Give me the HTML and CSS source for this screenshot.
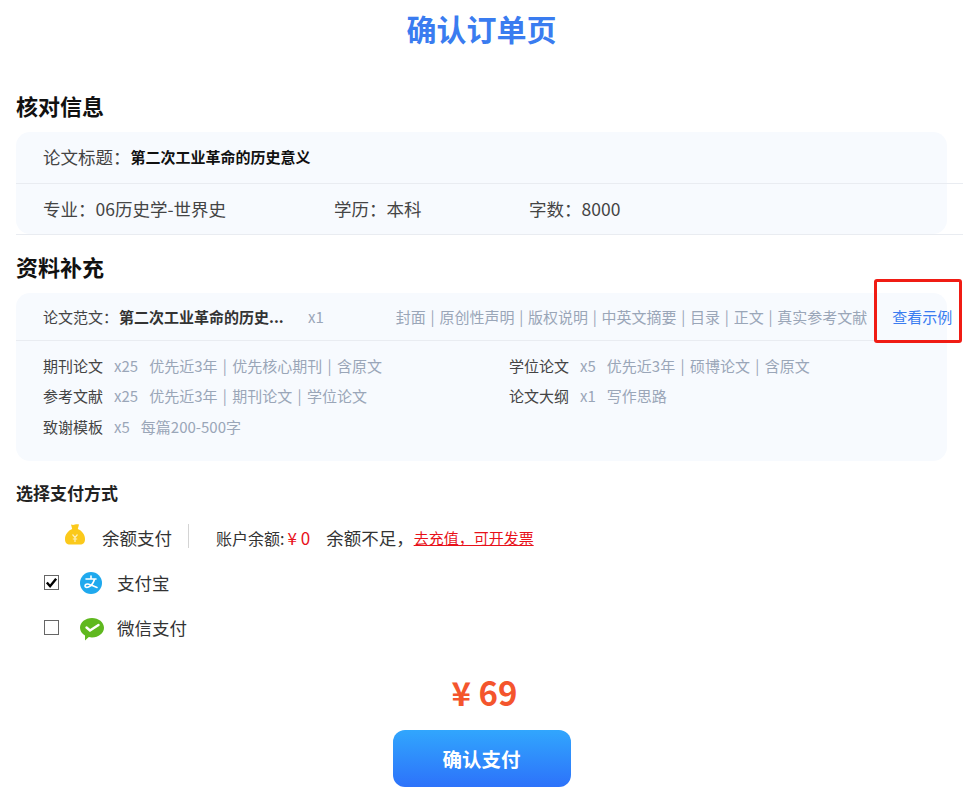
FILE: index.html
```html
<!DOCTYPE html>
<html lang="zh-CN">
<head>
    <meta charset="UTF-8">
    <title>确认订单页</title>
    <link rel="stylesheet" href="styles.css">
</head>
<body>
    <h1 class="page-title">确认订单页</h1>

    <h2 class="section-title first">核对信息</h2>
    <div class="info-row">
        <div class="info-inner top"><span>论文标题：</span><b class="paper-name">第二次工业革命的历史意义</b></div>
    </div>
    <div class="info-row">
        <div class="info-inner bottom">
            <span class="col-major">专业：06历史学-世界史</span>
            <span class="col-degree">学历：本科</span>
            <span>字数：8000</span>
        </div>
    </div>

    <h2 class="section-title">资料补充</h2>
    <div class="extra-card">
        <div class="extra-head">
            <span class="dark sample-label">论文范文：</span><b class="sample-name">第二次工业革命的历史...</b>
            <span class="count">x1</span>
            <span class="parts">封面 | 原创性声明 | 版权说明 | 中英文摘要 | 目录 | 正文 | 真实参考文献</span>
            <a class="example-link">查看示例</a>
            <div class="red-box"></div>
        </div>
        <div class="extra-grid">
            <div class="extra-item"><span class="dark">期刊论文</span><span class="count">x25</span><span class="parts-text">优先近3年 | 优先核心期刊 | 含原文</span></div>
            <div class="extra-item"><span class="dark">学位论文</span><span class="count">x5</span><span class="parts-text">优先近3年 | 硕博论文 | 含原文</span></div>
            <div class="extra-item"><span class="dark">参考文献</span><span class="count">x25</span><span class="parts-text">优先近3年 | 期刊论文 | 学位论文</span></div>
            <div class="extra-item"><span class="dark">论文大纲</span><span class="count">x1</span><span class="parts-text">写作思路</span></div>
            <div class="extra-item"><span class="dark">致谢模板</span><span class="count">x5</span><span class="parts-text">每篇200-500字</span></div>
        </div>
    </div>

    <h3 class="pay-title">选择支付方式</h3>
    <div class="pay-balance">
        <svg class="bag-icon" width="20" height="21" viewBox="0 0 20 21">
            <path fill="#fbc91b" d="M6 .5c1.300.600 2.600.600 4 .100s2.800-.500 4 0L12.800 5C16.800 6.500 20 10.500 20 15c0 4-1.800 5.500-5 5.500H5c-3.200 0-5-1.500-5-5.500 0-4.500 3.200-8.500 7.200-10z"/>
            <path fill="none" stroke="#fff" stroke-opacity=".7" stroke-width="1.200" d="M7.500 10.500l2.500 3 2.500-3M10 13.500v4.500M7.800 15h4.400"/>
        </svg>
        <span class="bal-label">余额支付</span>
        <span class="bal-sep"></span>
        <span class="bal-account">账户余额:</span>
        <span class="bal-money">¥ 0</span>
        <span class="bal-lack">余额不足，</span>
        <a class="recharge">去充值，可开发票</a>
    </div>
    <div class="pay-option">
        <span class="check-box checked">
            <svg width="14" height="14" viewBox="0 0 14 14"><path fill="none" stroke="#000" stroke-width="2.600" d="M2 6.500l3.500 4L12 2.500"/></svg>
        </span>
        <svg class="pay-icon" width="22" height="22" viewBox="0 0 22 22">
            <circle cx="11" cy="11" r="11" fill="#1fa9ee"/>
            <path fill="none" stroke="#fff" stroke-width="1.600" stroke-linecap="round" d="M6 7h10M11 4v3M14.500 7c-.800 3.500-3.200 6.800-6 8-1.900.800-3.500.300-3.500-1 0-1.600 1.900-2.400 3.800-1.800 2.700.800 5 2.200 8.200 3.300"/>
        </svg>
        <span>支付宝</span>
    </div>
    <div class="pay-option">
        <span class="check-box"></span>
        <svg class="pay-icon wechat" width="24" height="23" viewBox="0 0 24 23">
            <path fill="#5fb81f" d="M12 0c6.600 0 12 4.300 12 9.700s-5.400 9.700-12 9.700c-1.100 0-2.200-.100-3.200-.400L5 22.500v-5C2 15.700 0 12.900 0 9.700 0 4.300 5.400 0 12 0z"/>
            <path fill="none" stroke="#fff" stroke-width="2.400" stroke-linecap="round" d="M6.500 9.500l3.500 3L18.500 7"/>
        </svg>
        <span>微信支付</span>
    </div>

    <div class="total">¥ 69</div>
    <button class="pay-btn" type="button">确认支付</button>
</body>
</html>
```

FILE: styles.css
```css
* {
    box-sizing: border-box;
}
body {
    margin: 0;
    font-family: "Noto Sans CJK SC", "Liberation Sans", sans-serif;
    color: #333;
    background: #fff;
    overflow-x: hidden;
}
.page-title {
    margin: 0;
    padding-top: 6px;
    height: 47px;
    line-height: 44px;
    text-align: center;
    font-size: 30px;
    font-weight: 700;
    color: #3a7cf0;
}
.section-title {
    margin: 0 0 0 16px;
    height: 58px;
    padding-top: 2px;
    line-height: 58px;
    font-size: 22px;
    font-weight: 700;
    color: #111;
}
.section-title.first {
    height: 85px;
    padding-top: 29px;
}
.info-row {
    margin-left: 16px;
    border-bottom: 1px solid #e9ecf1;
}
.info-inner {
    height: 50px;
    margin-right: 16px;
    padding-left: 27px;
    padding-bottom: 2px;
    display: flex;
    align-items: center;
    font-size: 17.500px;
    color: #444;
    background: #f7fafe;
}
.info-inner.top {
    height: 51px;
    border-radius: 14px 14px 0 0;
}
.info-inner.bottom {
    border-radius: 0 0 14px 14px;
}
.paper-name {
    font-size: 15px;
    color: #111;
}
.col-major {
    width: 291px;
}
.col-degree {
    width: 195px;
}
.extra-card {
    margin: 0 16px;
    height: 168px;
    background: #f7fafe;
    border-radius: 14px;
    font-size: 15px;
    color: #9aa6b8;
}
.extra-head {
    position: relative;
    height: 48px;
    padding-left: 27px;
    display: flex;
    align-items: center;
    white-space: nowrap;
    border-bottom: 1px solid #e9ecf1;
}
.extra-head > * {
    flex-shrink: 0;
}
.dark {
    color: #444;
}
.sample-label {
    margin-right: 1px;
}
.sample-name {
    width: 189px;
    color: #333;
}
.count {
    margin-right: 11px;
}
.parts {
    margin-left: 61px;
    word-spacing: 1.400px;
}
.parts-text {
    word-spacing: 2px;
}
.example-link {
    margin-left: 25px;
    color: #3a7cf0;
}
.red-box {
    position: absolute;
    left: 858px;
    top: -14px;
    width: 88px;
    height: 64px;
    border: 3px solid #f01c14;
    border-radius: 3px;
}
.extra-grid {
    display: grid;
    grid-template-columns: 466px 1fr;
    grid-auto-rows: 30.500px;
    padding: 9px 0 0 27px;
}
.extra-item {
    display: flex;
    align-items: center;
}
.extra-item .dark {
    margin-right: 11px;
}
.pay-title {
    margin: 0 0 0 16px;
    height: 54px;
    padding-top: 17px;
    line-height: 30px;
    font-size: 17px;
    font-weight: 700;
    color: #222;
}
.pay-balance {
    height: 45px;
    display: flex;
    align-items: center;
    padding-left: 65px;
    font-size: 16px;
}
.bag-icon {
    margin-right: 17px;
    margin-top: -7px;
}
.bal-label {
    font-size: 17.500px;
    margin-right: 16px;
}
.bal-sep {
    width: 1px;
    height: 24px;
    margin-right: 27px;
    margin-top: -4px;
    background: #d4d4d4;
}
.bal-money {
    margin-left: 3px;
    margin-right: 16px;
    font-size: 17px;
    color: #e8111a;
}
.bal-lack {
    font-size: 17.500px;
}
.recharge {
    font-size: 15px;
    color: #e8111a;
    text-decoration: underline;
}
.pay-option {
    height: 45px;
    display: flex;
    align-items: center;
    padding-left: 44px;
    font-size: 17.500px;
}
.check-box {
    width: 15px;
    height: 15px;
    margin-right: 21px;
    border: 1px solid #666;
    display: flex;
    align-items: center;
    justify-content: center;
}
.pay-icon {
    margin-right: 15px;
}
.pay-icon.wechat {
    margin-top: 3px;
    margin-right: 13px;
}
.total {
    margin-top: 17px;
    padding-left: 6px;
    text-align: center;
    height: 50px;
    line-height: 50px;
    font-size: 33px;
    font-weight: 700;
    color: #f4552d;
}
.pay-btn {
    display: block;
    width: 178px;
    height: 57px;
    margin: 13px auto 0;
    border: 0;
    border-radius: 12px;
    background: linear-gradient(#31a6fd, #2d72fa);
    color: #fff;
    font-family: inherit;
    font-size: 19.500px;
    font-weight: 700;
}
```
